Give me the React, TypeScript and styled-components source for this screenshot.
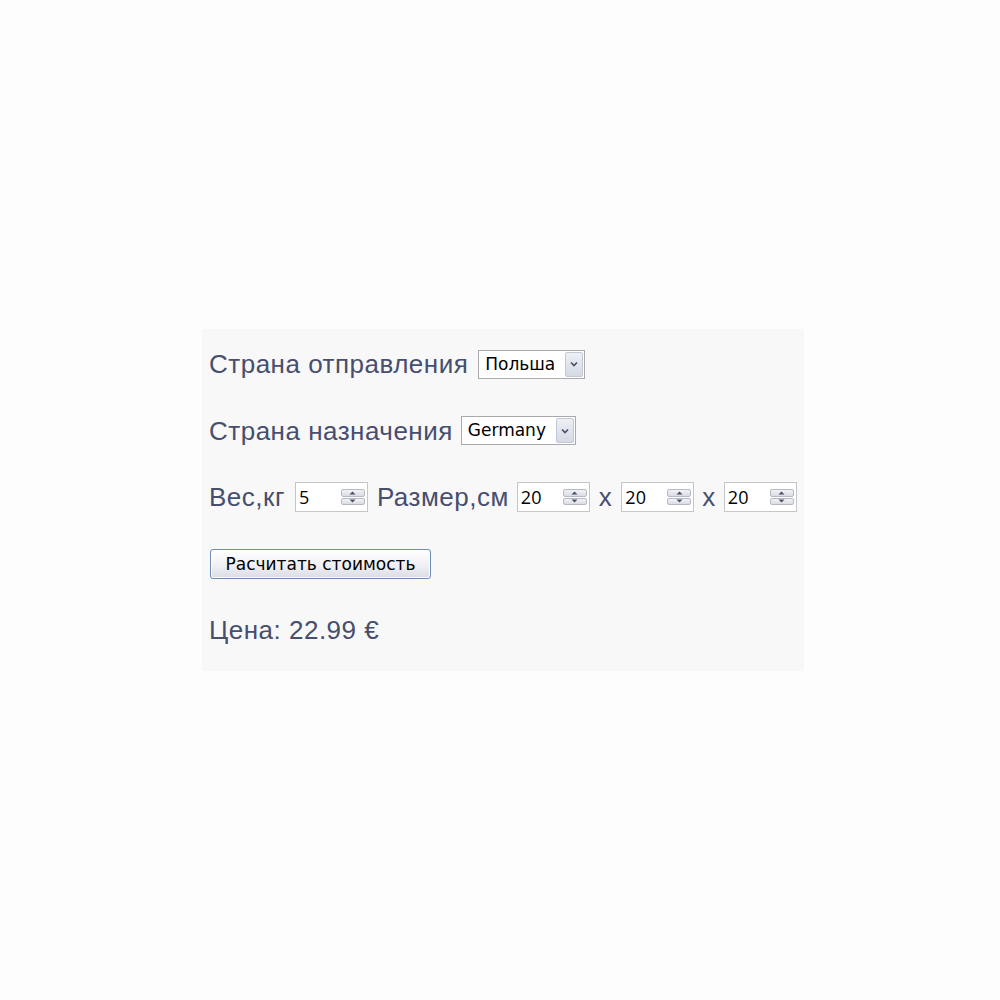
import React from "react";
import styled, { createGlobalStyle } from "styled-components";

const Global = createGlobalStyle`
  html, body { margin: 0; padding: 0; background: #fdfdfd; }
  body { width: 1000px; height: 1000px; overflow: hidden; }
`;

const Page = styled.div`
  padding: 329px 0 0 202px;
`;

const Panel = styled.div`
  width: 602px;
  height: 342px;
  box-sizing: border-box;
  background: #f8f8f8;
  padding: 20px 0 0 7px;
  display: flex;
  flex-direction: column;
  gap: 36.5px;
`;

const Row = styled.div`
  height: 30px;
  display: flex;
  align-items: center;
  font-family: "Liberation Sans", Arial, sans-serif;
  font-size: 26px;
  letter-spacing: 0.5px;
  color: #474e6e;
  white-space: nowrap;
`;

const Label = styled.span<{ $mr?: number; $ml?: number }>`
  margin-right: ${(p) => p.$mr ?? 8}px;
  margin-left: ${(p) => p.$ml ?? 0}px;
  line-height: 30px;
`;

const SelectBox = styled.div<{ $w: number }>`
  width: ${(p) => p.$w}px;
  height: 29px;
  box-sizing: border-box;
  border: 1px solid #a9a9ae;
  background: #ffffff;
  display: flex;
  align-items: center;
  padding: 1px;
  letter-spacing: 0;
`;

const SelectValue = styled.span`
  flex: 1;
  padding-left: 5px;
  font-family: "DejaVu Sans", Tahoma, sans-serif;
  font-size: 17px;
  color: #000;
  line-height: 25px;
`;

const ArrowButton = styled.div`
  width: 18px;
  height: 25px;
  box-sizing: border-box;
  border: 1px solid #c3c8d6;
  border-radius: 2px;
  background: linear-gradient(#eef0f6, #d5d9e5);
  display: flex;
  align-items: center;
  justify-content: center;
`;

const NumberBox = styled.div`
  width: 73px;
  height: 30px;
  box-sizing: border-box;
  border: 1px solid #c6c6ca;
  background: #ffffff;
  display: flex;
  align-items: center;
  padding: 0 2px 0 3px;
  letter-spacing: 0;
`;

const NumberValue = styled.span`
  flex: 1;
  font-family: "Open Sans", "Segoe UI", sans-serif;
  font-size: 18px;
  color: #000;
`;

const Spinner = styled.div`
  width: 24px;
  height: 16px;
  display: flex;
  flex-direction: column;
  gap: 1px;
`;

const SpinHalf = styled.div`
  flex: 1;
  box-sizing: border-box;
  border: 1px solid #b7bac4;
  border-radius: 2px;
  background: linear-gradient(#f2f3f7, #d9dce5);
  display: flex;
  align-items: center;
  justify-content: center;
`;

const Button = styled.button`
  width: 221px;
  height: 30px;
  box-sizing: border-box;
  border: 1px solid #6f8db3;
  border-radius: 3px;
  background: linear-gradient(#ffffff 0%, #f3f3f7 45%, #dcdce6 100%);
  font-family: "DejaVu Sans", Tahoma, sans-serif;
  font-size: 17px;
  letter-spacing: 0;
  color: #000;
  padding: 0;
  margin-left: 1px;
  box-shadow: inset 0 0 0 1px #ffffff;
`;

const Chevron = () => (
  <svg width="8" height="6" viewBox="0 0 8 6">
    <path d="M1 1.5 L4 4.5 L7 1.5" fill="none" stroke="#4a5060" strokeWidth="1.6" />
  </svg>
);

const Tri = ({ up }: { up?: boolean }) => (
  <svg width="7" height="4" viewBox="0 0 7 4">
    <path d={up ? "M0.5 3.5 L3.5 0.5 L6.5 3.5 Z" : "M0.5 0.5 L3.5 3.5 L6.5 0.5 Z"} fill="#4a5060" />
  </svg>
);

const Select = ({ value, width }: { value: string; width: number }) => (
  <SelectBox $w={width}>
    <SelectValue>{value}</SelectValue>
    <ArrowButton>
      <Chevron />
    </ArrowButton>
  </SelectBox>
);

const NumberInput = ({ value }: { value: string }) => (
  <NumberBox>
    <NumberValue>{value}</NumberValue>
    <Spinner>
      <SpinHalf>
        <Tri up />
      </SpinHalf>
      <SpinHalf>
        <Tri />
      </SpinHalf>
    </Spinner>
  </NumberBox>
);

export default function App() {
  return (
    <>
      <Global />
      <Page>
        <Panel>
          <Row>
            <Label $mr={10}>Страна отправления</Label>
            <Select value="Польша" width={107} />
          </Row>
          <Row>
            <Label $mr={8}>Страна назначения</Label>
            <Select value="Germany" width={115} />
          </Row>
          <Row>
            <Label $mr={10}>Вес,кг</Label>
            <NumberInput value="5" />
            <Label $ml={9} $mr={8}>Размер,см</Label>
            <NumberInput value="20" />
            <Label $ml={9} $mr={9}>x</Label>
            <NumberInput value="20" />
            <Label $ml={8} $mr={8}>x</Label>
            <NumberInput value="20" />
          </Row>
          <Row>
            <Button>Расчитать стоимость</Button>
          </Row>
          <Row>
            <Label>Цена: 22.99 €</Label>
          </Row>
        </Panel>
      </Page>
    </>
  );
}
